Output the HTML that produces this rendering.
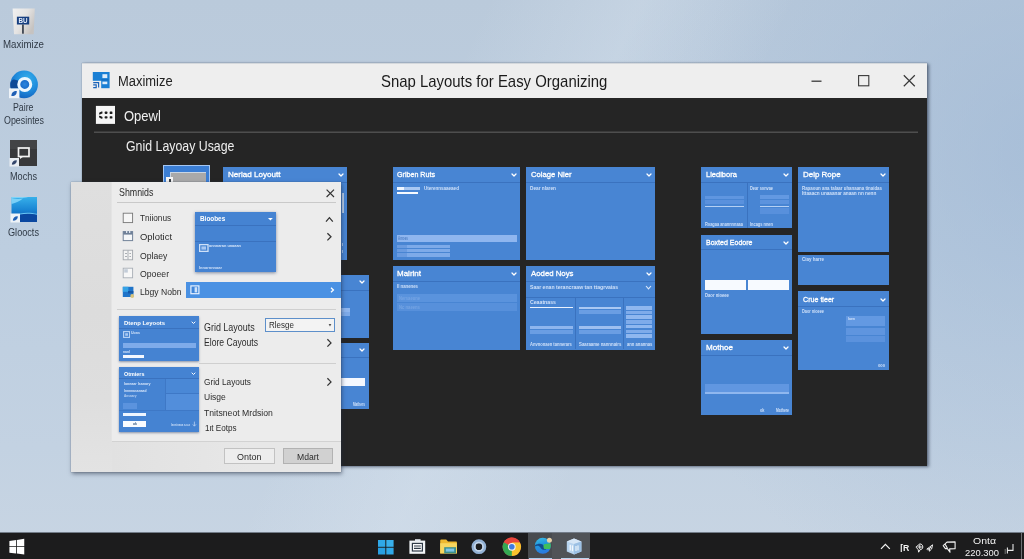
<!DOCTYPE html>
<html lang="en"><head><meta charset="utf-8"><title>Snap Layouts for Easy Organizing</title>
<style>
html,body{margin:0;padding:0}
body{width:1024px;height:559px;overflow:hidden;position:relative;font-family:"Liberation Sans",sans-serif;background:#b9cbdd}
#root{position:absolute;left:0;top:0;width:1024px;height:559px;overflow:hidden;will-change:transform}
#root div,#root span,#root svg,#root section{position:absolute;display:block}
.grp{left:0;top:0;width:0;height:0}
.t{white-space:nowrap;transform-origin:0 0}
</style></head><body><div id="root">
<section id="wallpaper" class="grp" aria-label="Desktop wallpaper">
<div style="left:0;top:0;width:1024px;height:559px;background:linear-gradient(180deg,#bacadb 0%,#bdcee0 45%,#c3d2e2 80%,#c8d5e3 100%)"></div>
<div style="left:0;top:0;width:1024px;height:559px;background:radial-gradient(ellipse 430px 470px at 1040px 150px,rgba(152,179,211,.55) 0%,rgba(160,185,214,.36) 45%,rgba(172,193,218,0) 100%)"></div>
<div style="left:0;top:0;width:1024px;height:559px;background:linear-gradient(115deg,rgba(255,255,255,0) 38%,rgba(225,235,245,.28) 50%,rgba(255,255,255,0) 62%)"></div>
</section>
<section id="desktop-icons" class="grp" aria-label="Desktop icons">
<svg style="left:12px;top:7px;" width="25" height="28" viewBox="0 0 25 28"><defs><linearGradient id="g1" x1="0" x2="1" y1="0" y2=".6"><stop offset="0" stop-color="#f1f1f1"/><stop offset=".55" stop-color="#e4e3e2"/><stop offset="1" stop-color="#c6c3c1"/></linearGradient></defs>
<path d="M.6 1.4 L22.8 1.4 L21.7 27.2 L2 27.2 Z" fill="url(#g1)"/>
<rect x="4.9" y="9.7" width="12.3" height="7.8" fill="#173f80"/>
<text x="11.05" y="16" text-anchor="middle" font-family="Liberation Sans, sans-serif" font-weight="bold" font-size="6.6" fill="#e6eefb" textLength="9" lengthAdjust="spacingAndGlyphs">BU</text>
<rect x="10.2" y="17.5" width="1.5" height="9.2" fill="#202a38"/></svg>
<span class="t" style="left:3px;top:39px;font-size:10.43px;line-height:11px;color:#303a46;transform:scaleX(0.931);">Maximize</span>
<svg style="left:8px;top:70px;" width="32" height="30" viewBox="0 0 32 30"><defs><radialGradient id="g2" cx=".62" cy=".3" r=".85"><stop offset="0" stop-color="#35aeea"/><stop offset=".5" stop-color="#1f8bdc"/><stop offset="1" stop-color="#0e55b4"/></radialGradient>
<radialGradient id="g2b" cx=".5" cy=".5" r=".5"><stop offset="0" stop-color="#2a86de"/><stop offset="1" stop-color="#1463c4"/></radialGradient></defs>
<circle cx="16.1" cy="14.4" r="13.8" fill="url(#g2)"/>
<path d="M2.4 13 C3 10.8 4.4 9.6 6 9.4 L10 10.6 L10 18.6 L2.6 18.6 C2.3 16.8 2.2 15 2.4 13 Z" fill="#0b4896"/>
<circle cx="16.75" cy="14.4" r="6" fill="url(#g2b)" stroke="#ecf7ff" stroke-width="3"/>
<rect x="1" y="18.4" width="10.4" height="9.8" fill="#eef3f8"/>
<path d="M3.4 26 C3.2 22.8 5.8 20.8 8.8 21 C9 24.4 6.6 26.6 3.4 26 Z" fill="#1f5fb5"/></svg>
<span class="t" style="left:13px;top:102px;font-size:10.43px;line-height:11px;color:#303a46;transform:scaleX(0.842);">Paire</span>
<span class="t" style="left:4px;top:115px;font-size:10.43px;line-height:11px;color:#303a46;transform:scaleX(0.852);">Opesintes</span>
<svg style="left:9px;top:139px;" width="30" height="29" viewBox="0 0 30 29"><rect x="1" y="1" width="27" height="26" fill="#38393b"/>
<rect x="1" y="1" width="27" height="9" fill="#434446"/>
<rect x="9.5" y="9" width="10.5" height="8.5" fill="none" stroke="#f4f4f4" stroke-width="1.7"/>
<path d="M11 17 L11 20 L14.5 17.5 Z" fill="#f4f4f4"/>
<rect x="0.5" y="19" width="9.5" height="8.5" fill="#e9edf2"/>
<path d="M2.8 25.6 C2.8 23 5 21 7.8 21.3 C8 24 5.8 26.2 2.8 25.6 Z" fill="#34466b"/></svg>
<span class="t" style="left:10px;top:171px;font-size:10.14px;line-height:11px;color:#303a46;transform:scaleX(0.904);">Mochs</span>
<svg style="left:9.5px;top:196.3px;" width="29" height="28" viewBox="0 0 29 28"><defs><linearGradient id="g4" x1="0" y1="0" x2="0" y2="1"><stop offset="0" stop-color="#37b0ea"/><stop offset=".5" stop-color="#1a86d4"/><stop offset="1" stop-color="#0b4fa8"/></linearGradient></defs>
<rect x="1.5" y="1" width="25.5" height="25" fill="url(#g4)"/>
<path d="M1.5 3 C8 1.5 14 2.5 18 1 L1.5 1 Z M1.5 3 L1.5 8 C6 7 10 5 13 2.5 C9 3 5 3 1.5 3Z" fill="#8fdcfb" opacity=".8"/>
<path d="M10 18 C16 16.5 22 17.2 27 18.2 L27 26 L10 26 Z" fill="#0a47a0"/>
<path d="M10 17.6 C16 16 22 16.8 27 17.8 L27 18.8 C22 17.8 16 17.2 10 18.6 Z" fill="#69c6f5"/>
<rect x="0.5" y="17.5" width="9.5" height="9" fill="#eef3f8"/>
<path d="M2.8 24.6 C2.8 22 5 20 7.8 20.3 C8 23 5.8 25.2 2.8 24.6 Z" fill="#1f5fb5"/></svg>
<span class="t" style="left:8px;top:227px;font-size:10.14px;line-height:11px;color:#303a46;transform:scaleX(0.902);">Gloocts</span>
</section>
<section id="app-window" class="grp" aria-label="Snap Layouts window">
<div style="left:82px;top:63px;width:845px;height:403px;background:#252525;box-shadow:2px 1px 3px rgba(45,55,75,.6),0 0 1px rgba(45,55,75,.5)"></div>
<div style="left:82px;top:63px;width:845px;height:35px;background:#eeeeee;"></div>
<div style="left:82px;top:63px;width:845px;height:1px;background:#d4d8dc;"></div>
<svg style="left:91px;top:71px;" width="19" height="19" viewBox="0 0 19 19"><rect x="1.8" y="1" width="16.8" height="16.2" fill="#1a7fd4"/>
<rect x="11.4" y="3.2" width="4.9" height="3.9" fill="#dcecfa"/><rect x="11.4" y="10.6" width="4.9" height="2.6" fill="#dcecfa"/>
<rect x="10.4" y="8.4" width="7" height="1" fill="#1568b8"/>
<rect x="0" y="9.8" width="10.2" height="9.2" fill="#eeeeee"/>
<path d="M2.2 11.6 L7.6 11.6 L7.6 16.6 M2.2 13.9 L5.2 13.9 L5.2 16.6 L2.2 16.6" stroke="#1b63b8" stroke-width="1.15" fill="none"/></svg>
<span class="t" style="left:118.4px;top:73px;font-size:13.91px;line-height:16px;color:#222;transform:scaleX(0.930);">Maximize</span>
<span class="t" style="left:380.5px;top:72px;font-size:16.81px;line-height:19px;color:#1a1a1a;transform:scaleX(0.888);">Snap Layouts for Easy Organizing</span>
<svg style="left:808px;top:72px;" width="112" height="18" viewBox="0 0 112 18"><path d="M3.5 9.2 H13.5" stroke="#383838" stroke-width="1.3"/>
<rect x="50.6" y="3.6" width="10.2" height="10.2" fill="none" stroke="#383838" stroke-width="1.1"/>
<path d="M95.8 3.3 L106.8 14.2 M106.8 3.3 L95.8 14.2" stroke="#383838" stroke-width="1.2"/></svg>
<svg style="left:95px;top:105px;" width="21" height="20" viewBox="0 0 21 20"><rect x=".9" y=".9" width="19.1" height="18" fill="#f6f6f6"/>
<g fill="#1e1e1e"><rect x="9.6" y="6.6" width="2.9" height="2.3" rx=".8"/><rect x="14.7" y="6.6" width="2.7" height="2.3" rx=".5"/>
<rect x="9.6" y="11.3" width="2.9" height="2.3" rx=".8"/><rect x="14.7" y="11.3" width="2.7" height="2.3" rx=".5"/>
<path d="M7.2 6.2 L4.4 7.4 L3.9 9.4 L5.6 9.2 L7.6 8.2 Z M3.9 10.8 L5.6 11 L7.6 12 L7.2 14 L4.4 12.8 Z"/></g></svg>
<span class="t" style="left:123.6px;top:107px;font-size:15.22px;line-height:17px;color:#f0f0f0;transform:scaleX(0.855);">Opewl</span>
<div style="left:94px;top:131px;width:824px;height:1px;background:#3a3a3a;"></div>
<div style="left:94px;top:132px;width:824px;height:1px;background:#4e4e4e;"></div>
<span class="t" style="left:126px;top:137px;font-size:15.36px;line-height:17px;color:#eeeeee;transform:scaleX(0.804);">Gnid Layoay Usage</span>
<div style="left:163px;top:165px;width:47.2px;height:35px;background:#3b7ed4;box-shadow:inset 0 0 0 1px #a4c6f2"></div>
<div style="left:170.2px;top:171.8px;width:35.7px;height:18.2px;background:#a9a9a9;box-shadow:inset 1px 1px 0 #c9d6e4"></div>
<div style="left:166px;top:176.5px;width:7.3px;height:8.5px;background:#f4f4f4;"></div>
<div style="left:168.6px;top:178.6px;width:2.4px;height:3.4px;background:#3a4046;"></div>
<div style="left:223px;top:167px;width:124px;height:93px;background:#4885d3;"></div>
<div style="left:223px;top:181.5px;width:124px;height:1px;background:#3a72bf;"></div>
<span class="t" style="left:227.5px;top:170px;font-size:7.97px;line-height:9px;color:#fff;transform:scaleX(1.013);-webkit-text-stroke:.3px #fff;">Nerlad Loyoutt</span>
<svg style="left:337.7px;top:173.2px;" width="6" height="4" viewBox="0 0 6 4"><path d="M1 1 L3 3 L5 1" stroke="#fff" stroke-width="1.25" fill="none" stroke-linecap="round" stroke-linejoin="round"/></svg>
<div style="left:341.5px;top:192.5px;width:2.1px;height:20.5px;background:#b8cdea;"></div>
<div style="left:341.5px;top:243px;width:1.7px;height:3px;background:#9fc0ee;"></div>
<div style="left:341.5px;top:250px;width:1.7px;height:3px;background:#9fc0ee;"></div>
<div style="left:336px;top:275px;width:32.5px;height:62.5px;background:#4885d3;"></div>
<div style="left:336px;top:289.5px;width:32.5px;height:1px;background:#3a72bf;"></div>
<svg style="left:359px;top:280.4px;" width="6" height="4" viewBox="0 0 6 4"><path d="M1 1 L3 3 L5 1" stroke="#fff" stroke-width="1.25" fill="none" stroke-linecap="round" stroke-linejoin="round"/></svg>
<div style="left:340px;top:307.5px;width:9.5px;height:4px;background:#8fb6ee;"></div>
<div style="left:340px;top:312.3px;width:9.5px;height:3.7px;background:#7eaae8;"></div>
<div style="left:336px;top:343px;width:32.5px;height:66px;background:#4885d3;"></div>
<div style="left:336px;top:357px;width:32.5px;height:1px;background:#3a72bf;"></div>
<svg style="left:359px;top:348.2px;" width="6" height="4" viewBox="0 0 6 4"><path d="M1 1 L3 3 L5 1" stroke="#fff" stroke-width="1.25" fill="none" stroke-linecap="round" stroke-linejoin="round"/></svg>
<div style="left:340px;top:378px;width:25.3px;height:8px;background:#f4f8ff;"></div>
<span class="t" style="left:353px;top:402px;font-size:4.42px;line-height:5px;color:#e6f0ff;transform:scaleX(0.708);font-weight:bold;opacity:0.85;">Mathers</span>
<div style="left:392.5px;top:167px;width:127.5px;height:93px;background:#4885d3;"></div>
<div style="left:392.5px;top:181.5px;width:127.5px;height:1px;background:#3a72bf;"></div>
<span class="t" style="left:397px;top:170px;font-size:7.97px;line-height:9px;color:#fff;transform:scaleX(0.894);-webkit-text-stroke:.3px #fff;">Griben Ruts</span>
<svg style="left:510.7px;top:173.2px;" width="6" height="4" viewBox="0 0 6 4"><path d="M1 1 L3 3 L5 1" stroke="#fff" stroke-width="1.25" fill="none" stroke-linecap="round" stroke-linejoin="round"/></svg>
<div style="left:396.5px;top:187px;width:23.5px;height:2.6px;background:#a9c8f3;"></div>
<div style="left:396.5px;top:187px;width:7.5px;height:2.6px;background:#eef5ff;"></div>
<div style="left:396.5px;top:192px;width:21.5px;height:2px;background:#f6faff;"></div>
<span class="t" style="left:424px;top:186px;font-size:4.42px;line-height:5px;color:#e6f0ff;transform:scaleX(1.025);font-weight:bold;opacity:0.85;">Uterennsaaeaed</span>
<div style="left:396.5px;top:234.8px;width:120.5px;height:7.6px;background:#8fb6ef;"></div>
<span class="t" style="left:398px;top:236px;font-size:4.42px;line-height:5px;color:#4f7fc4;transform:scaleX(0.678);font-weight:bold;opacity:1;">Amoes</span>
<div style="left:396.5px;top:245px;width:53px;height:3.3px;background:#7daae9;"></div>
<div style="left:396.5px;top:245px;width:10.5px;height:3.3px;background:#6a9be0;"></div>
<div style="left:396.5px;top:249.2px;width:53px;height:3.3px;background:#7daae9;"></div>
<div style="left:396.5px;top:249.2px;width:10.5px;height:3.3px;background:#6a9be0;"></div>
<div style="left:396.5px;top:253.4px;width:53px;height:3.3px;background:#7daae9;"></div>
<div style="left:396.5px;top:253.4px;width:10.5px;height:3.3px;background:#6a9be0;"></div>
<div style="left:526px;top:167px;width:129.3px;height:93px;background:#4885d3;"></div>
<div style="left:526px;top:181.5px;width:129.3px;height:1px;background:#3a72bf;"></div>
<span class="t" style="left:530.5px;top:170px;font-size:7.97px;line-height:9px;color:#fff;transform:scaleX(0.962);-webkit-text-stroke:.3px #fff;">Colage Nler</span>
<svg style="left:646px;top:173.2px;" width="6" height="4" viewBox="0 0 6 4"><path d="M1 1 L3 3 L5 1" stroke="#fff" stroke-width="1.25" fill="none" stroke-linecap="round" stroke-linejoin="round"/></svg>
<span class="t" style="left:530px;top:186px;font-size:4.42px;line-height:5px;color:#e6f0ff;transform:scaleX(1.069);font-weight:bold;opacity:0.85;">Dear nlaren</span>
<div style="left:392.5px;top:266px;width:127.5px;height:83.5px;background:#4885d3;"></div>
<div style="left:392.5px;top:280.5px;width:127.5px;height:1px;background:#3a72bf;"></div>
<span class="t" style="left:397px;top:269px;font-size:7.97px;line-height:9px;color:#fff;transform:scaleX(1.004);-webkit-text-stroke:.3px #fff;">Mairint</span>
<svg style="left:510.7px;top:272.2px;" width="6" height="4" viewBox="0 0 6 4"><path d="M1 1 L3 3 L5 1" stroke="#fff" stroke-width="1.25" fill="none" stroke-linecap="round" stroke-linejoin="round"/></svg>
<span class="t" style="left:397px;top:284px;font-size:4.42px;line-height:5px;color:#e6f0ff;transform:scaleX(0.971);font-weight:bold;opacity:0.85;">Il nanenes</span>
<div style="left:397px;top:294.4px;width:120px;height:7.8px;background:#5a93dd;"></div>
<div style="left:397px;top:303.2px;width:120px;height:7.5px;background:#5790db;"></div>
<span class="t" style="left:399px;top:296px;font-size:4.42px;line-height:5px;color:#78a6e4;transform:scaleX(0.929);font-weight:bold;opacity:0.9;">Nersaeune</span>
<span class="t" style="left:399px;top:305px;font-size:4.42px;line-height:5px;color:#78a6e4;transform:scaleX(0.950);font-weight:bold;opacity:0.9;">Nc naeens</span>
<div style="left:526px;top:266px;width:129.3px;height:83.5px;background:#4885d3;"></div>
<div style="left:526px;top:280.5px;width:129.3px;height:1px;background:#3a72bf;"></div>
<span class="t" style="left:530.5px;top:269px;font-size:7.97px;line-height:9px;color:#fff;transform:scaleX(0.979);-webkit-text-stroke:.3px #fff;">Aoded Noys</span>
<svg style="left:646px;top:272.2px;" width="6" height="4" viewBox="0 0 6 4"><path d="M1 1 L3 3 L5 1" stroke="#fff" stroke-width="1.25" fill="none" stroke-linecap="round" stroke-linejoin="round"/></svg>
<span class="t" style="left:530px;top:284px;font-size:5.22px;line-height:6px;color:#e6f0ff;transform:scaleX(0.985);font-weight:bold;opacity:0.85;">Saar enan terancraaw tan ttagrvaias</span>
<svg style="left:644.5px;top:284.5px;" width="7" height="5" viewBox="0 0 7 5"><path d="M1 1 L3.5 3.8 L6 1" stroke="#dbe8fb" stroke-width="1.1" fill="none"/></svg>
<div style="left:526px;top:296.8px;width:129.3px;height:1px;background:#3a72bf;"></div>
<div style="left:575.2px;top:297.8px;width:1px;height:51.7px;background:#3a72bf;"></div>
<div style="left:623.4px;top:297.8px;width:1px;height:51.7px;background:#3a72bf;"></div>
<span class="t" style="left:530px;top:300px;font-size:4.42px;line-height:5px;color:#e6f0ff;transform:scaleX(1.176);font-weight:bold;opacity:0.85;">Ceaatnass</span>
<div style="left:530px;top:306.5px;width:43px;height:1.1px;background:#e9f2ff;"></div>
<div style="left:530px;top:326px;width:43px;height:3.4px;background:#8db5ee;"></div>
<div style="left:530px;top:330.2px;width:43px;height:3.8px;background:#6a9ee3;"></div>
<span class="t" style="left:530px;top:342px;font-size:4.42px;line-height:5px;color:#e6f0ff;transform:scaleX(0.924);font-weight:bold;opacity:0.85;">Anvnonaen tannerars</span>
<div style="left:578.5px;top:306.5px;width:42.5px;height:2.3px;background:#a9c8f3;"></div>
<div style="left:578.5px;top:309.6px;width:42.5px;height:4.4px;background:#6a9ee3;"></div>
<div style="left:578.5px;top:326px;width:42.5px;height:3px;background:#9dbff0;"></div>
<div style="left:578.5px;top:329.8px;width:42.5px;height:4.2px;background:#6a9ee3;"></div>
<span class="t" style="left:578.5px;top:342px;font-size:4.42px;line-height:5px;color:#e6f0ff;transform:scaleX(0.983);font-weight:bold;opacity:0.85;">Saaraame nannnairs</span>
<div style="left:626px;top:306px;width:25.5px;height:3.7px;background:#8fb7ef;"></div>
<div style="left:626px;top:310.7px;width:25.5px;height:3.7px;background:#7eabea;"></div>
<div style="left:626px;top:315.4px;width:25.5px;height:3.7px;background:#8fb7ef;"></div>
<div style="left:626px;top:320.1px;width:25.5px;height:3.7px;background:#7eabea;"></div>
<div style="left:626px;top:324.8px;width:25.5px;height:3.7px;background:#8fb7ef;"></div>
<div style="left:626px;top:329.5px;width:25.5px;height:3.7px;background:#7eabea;"></div>
<div style="left:626px;top:334.2px;width:25.5px;height:3.7px;background:#8fb7ef;"></div>
<span class="t" style="left:626.5px;top:342px;font-size:4.42px;line-height:5px;color:#e6f0ff;transform:scaleX(0.944);font-weight:bold;opacity:0.85;">ann anannas</span>
<div style="left:701px;top:167px;width:91.4px;height:61.4px;background:#4885d3;"></div>
<div style="left:701px;top:181.5px;width:91.4px;height:1px;background:#3a72bf;"></div>
<span class="t" style="left:705.5px;top:170px;font-size:7.97px;line-height:9px;color:#fff;transform:scaleX(0.942);-webkit-text-stroke:.3px #fff;">Lledibora</span>
<svg style="left:783.1px;top:173.2px;" width="6" height="4" viewBox="0 0 6 4"><path d="M1 1 L3 3 L5 1" stroke="#fff" stroke-width="1.25" fill="none" stroke-linecap="round" stroke-linejoin="round"/></svg>
<div style="left:746.6px;top:182px;width:1px;height:46.4px;background:#3a72bf;"></div>
<div style="left:705px;top:195.8px;width:39px;height:3.5px;background:#5f96e0;"></div>
<div style="left:705px;top:200.2px;width:39px;height:4.3px;background:#5a91dd;"></div>
<div style="left:705px;top:205.8px;width:39px;height:1.2px;background:#b5d0f4;"></div>
<span class="t" style="left:705px;top:222px;font-size:4.42px;line-height:5px;color:#e6f0ff;transform:scaleX(0.884);font-weight:bold;opacity:0.85;">Roagaa anannnnaaa</span>
<span class="t" style="left:750px;top:186px;font-size:4.42px;line-height:5px;color:#e6f0ff;transform:scaleX(0.875);font-weight:bold;opacity:0.85;">Dear sonvae</span>
<div style="left:760px;top:195px;width:28.5px;height:4px;background:#6399e2;"></div>
<div style="left:760px;top:200px;width:28.5px;height:4px;background:#5c93de;"></div>
<div style="left:760px;top:205.8px;width:28.5px;height:1.2px;background:#b5d0f4;"></div>
<div style="left:760px;top:208px;width:28.5px;height:6px;background:#5890dc;"></div>
<span class="t" style="left:750px;top:222px;font-size:4.42px;line-height:5px;color:#e6f0ff;transform:scaleX(0.892);font-weight:bold;opacity:0.85;">Incags nnen</span>
<div style="left:701px;top:234.7px;width:91.4px;height:99.3px;background:#4885d3;"></div>
<div style="left:701px;top:249.2px;width:91.4px;height:1px;background:#3a72bf;"></div>
<span class="t" style="left:705.5px;top:238px;font-size:7.97px;line-height:9px;color:#fff;transform:scaleX(0.882);-webkit-text-stroke:.3px #fff;">Boxted Eodore</span>
<svg style="left:783.1px;top:240.9px;" width="6" height="4" viewBox="0 0 6 4"><path d="M1 1 L3 3 L5 1" stroke="#fff" stroke-width="1.25" fill="none" stroke-linecap="round" stroke-linejoin="round"/></svg>
<div style="left:705px;top:280.3px;width:41px;height:10.1px;background:#f7faff;"></div>
<div style="left:747.8px;top:280.3px;width:41.2px;height:10.1px;background:#f7faff;"></div>
<span class="t" style="left:705px;top:293px;font-size:4.42px;line-height:5px;color:#e6f0ff;transform:scaleX(0.949);font-weight:bold;opacity:0.85;">Daor nioeee</span>
<div style="left:798.3px;top:167px;width:90.5px;height:85.2px;background:#4885d3;"></div>
<div style="left:798.3px;top:181.5px;width:90.5px;height:1px;background:#3a72bf;"></div>
<span class="t" style="left:802.8px;top:170px;font-size:7.97px;line-height:9px;color:#fff;transform:scaleX(0.998);-webkit-text-stroke:.3px #fff;">Delp Rope</span>
<svg style="left:879.5px;top:173.2px;" width="6" height="4" viewBox="0 0 6 4"><path d="M1 1 L3 3 L5 1" stroke="#fff" stroke-width="1.25" fill="none" stroke-linecap="round" stroke-linejoin="round"/></svg>
<span class="t" style="left:801.5px;top:186px;font-size:4.42px;line-height:5px;color:#e6f0ff;transform:scaleX(0.996);font-weight:bold;opacity:0.85;">Rapaoun ana talaar uhanaana  tinaidas</span>
<span class="t" style="left:801.5px;top:191px;font-size:4.42px;line-height:5px;color:#e6f0ff;transform:scaleX(1.064);font-weight:bold;opacity:0.85;">Ittaaacn unaaanar anaan nn nenn</span>
<div style="left:798.3px;top:255.2px;width:90.5px;height:29.6px;background:#4885d3;"></div>
<span class="t" style="left:802px;top:257px;font-size:4.42px;line-height:5px;color:#e6f0ff;transform:scaleX(1.018);font-weight:bold;opacity:0.85;">Ciay harre</span>
<div style="left:798.3px;top:291.3px;width:90.5px;height:78.7px;background:#4885d3;"></div>
<div style="left:798.3px;top:305.8px;width:90.5px;height:1px;background:#3a72bf;"></div>
<span class="t" style="left:802.8px;top:295px;font-size:7.97px;line-height:9px;color:#fff;transform:scaleX(0.892);-webkit-text-stroke:.3px #fff;">Crue tleer</span>
<svg style="left:879.5px;top:297.5px;" width="6" height="4" viewBox="0 0 6 4"><path d="M1 1 L3 3 L5 1" stroke="#fff" stroke-width="1.25" fill="none" stroke-linecap="round" stroke-linejoin="round"/></svg>
<span class="t" style="left:802px;top:309px;font-size:4.42px;line-height:5px;color:#e6f0ff;transform:scaleX(0.870);font-weight:bold;opacity:0.85;">Daor nioeee</span>
<div style="left:846px;top:316.3px;width:39px;height:10.1px;background:#6399e2;"></div>
<div style="left:846px;top:327.6px;width:39px;height:7px;background:#5f95df;"></div>
<div style="left:846px;top:336px;width:39px;height:6.2px;background:#5b92dd;"></div>
<span class="t" style="left:848px;top:317px;font-size:3.77px;line-height:4px;color:#e6f0ff;transform:scaleX(0.928);font-weight:bold;opacity:0.85;">Iaen</span>
<span class="t" style="left:878px;top:363px;font-size:4.42px;line-height:5px;color:#e6f0ff;transform:scaleX(0.864);font-weight:bold;opacity:0.85;">ooo</span>
<div style="left:701px;top:340px;width:91.4px;height:74.6px;background:#4885d3;"></div>
<div style="left:701px;top:354.5px;width:91.4px;height:1px;background:#3a72bf;"></div>
<span class="t" style="left:705.5px;top:343px;font-size:7.97px;line-height:9px;color:#fff;transform:scaleX(1.016);-webkit-text-stroke:.3px #fff;">Mothoe</span>
<svg style="left:783.1px;top:346.2px;" width="6" height="4" viewBox="0 0 6 4"><path d="M1 1 L3 3 L5 1" stroke="#fff" stroke-width="1.25" fill="none" stroke-linecap="round" stroke-linejoin="round"/></svg>
<div style="left:705px;top:384px;width:84px;height:7.6px;background:#6197e1;"></div>
<div style="left:705px;top:392px;width:84px;height:1.6px;background:#8fb7ef;"></div>
<span class="t" style="left:760px;top:408px;font-size:4.42px;line-height:5px;color:#e6f0ff;transform:scaleX(0.872);font-weight:bold;opacity:0.85;">ok</span>
<span class="t" style="left:776px;top:408px;font-size:4.42px;line-height:5px;color:#e6f0ff;transform:scaleX(0.767);font-weight:bold;opacity:0.85;">Mathere</span>
</section>
<section id="layout-dialog" class="grp" aria-label="Layout dialog">
<div style="left:71px;top:181.5px;width:269.5px;height:290.0px;background:#ececec;box-shadow:1px 2px 4px rgba(30,40,60,.5),0 0 1px rgba(60,70,90,.6)"></div>
<div style="left:71px;top:181.5px;width:40.5px;height:290px;background:linear-gradient(180deg,#dfdfdf 0%,#dcdcdc 45%,#dedede 75%,#e3e3e3 100%);"></div>
<div style="left:111.5px;top:441px;width:229px;height:30.5px;background:linear-gradient(90deg,#e1e1e1,#e7e7e7 60%)"></div>
<div style="left:111px;top:181.5px;width:1px;height:259.5px;background:#e4e4e4;"></div>
<span class="t" style="left:119px;top:187px;font-size:10.14px;line-height:11px;color:#2c2c2c;transform:scaleX(0.874);">Shmnids</span>
<svg style="left:325px;top:187.5px;" width="11" height="11" viewBox="0 0 11 11"><path d="M1.6 1.6 L9 9 M9 1.6 L1.6 9" stroke="#333" stroke-width="1.15"/></svg>
<div style="left:116.5px;top:202px;width:219px;height:1px;background:#c9c9c9;"></div>
<span class="t" style="left:139.6px;top:212px;font-size:9.86px;line-height:11px;color:#2c2c2c;transform:scaleX(0.837);">Tniionus</span>
<span class="t" style="left:139.6px;top:231px;font-size:9.86px;line-height:11px;color:#2c2c2c;transform:scaleX(0.960);">Oplotict</span>
<span class="t" style="left:139.6px;top:250px;font-size:9.86px;line-height:11px;color:#2c2c2c;transform:scaleX(0.877);">Oplaey</span>
<span class="t" style="left:139.6px;top:268px;font-size:9.86px;line-height:11px;color:#2c2c2c;transform:scaleX(0.885);">Opoeer</span>
<span class="t" style="left:139.6px;top:286px;font-size:9.86px;line-height:11px;color:#2c2c2c;transform:scaleX(0.874);">Lbgy Nobn</span>
<svg style="left:121.5px;top:212px;" width="12" height="12" viewBox="0 0 12 12"><rect x="1.2" y="1.2" width="9.4" height="9.4" fill="#f6f6f6" stroke="#777" stroke-width=".9"/></svg>
<svg style="left:121.5px;top:230px;" width="12" height="12" viewBox="0 0 12 12"><rect x="1.2" y="1.6" width="9.4" height="9" fill="#f4f6f8" stroke="#73839a" stroke-width="1"/><rect x="1.2" y="1.6" width="9.4" height="3" fill="#6f8098"/><rect x="4" y="0.6" width="1.3" height="2.4" fill="#dfe6ee"/><rect x="7" y="0.6" width="1.3" height="2.4" fill="#dfe6ee"/></svg>
<svg style="left:121.5px;top:248.5px;" width="12" height="12" viewBox="0 0 12 12"><rect x="1.2" y="1.2" width="9.4" height="9.6" fill="#f4f4f4" stroke="#a2a6ac" stroke-width=".9"/><path d="M6 1.5 V10.5 M3 4.5 h2 M3 7.5 h2 M7.4 4.5 h1.6 M7.4 7.5 h1.6" stroke="#a2a6ac" stroke-width=".9" fill="none"/></svg>
<svg style="left:121.5px;top:267px;" width="12" height="12" viewBox="0 0 12 12"><rect x="1.2" y="1.2" width="9.4" height="9.6" fill="#f7f7f7" stroke="#a8aeb6" stroke-width=".9"/><rect x="2.2" y="2.2" width="3.6" height="3.4" fill="#c3ccd8"/></svg>
<svg style="left:121.5px;top:285.5px;" width="13" height="12" viewBox="0 0 13 12"><rect x="0.8" y="0.8" width="10.6" height="10.2" fill="#1f74c9"/><rect x="0.8" y="0.8" width="5.6" height="5" fill="#36a3e6"/><rect x="6" y="5" width="5.4" height="2.4" fill="#1558a8"/><circle cx="10.2" cy="10" r="1.9" fill="#d9c37a"/></svg>
<div style="left:195.4px;top:211.5px;width:81px;height:60.8px;background:#4583d2;box-shadow:0 1px 3px rgba(40,60,100,.55)"></div>
<div style="left:195.4px;top:224.6px;width:81px;height:1px;background:#3a72bf;"></div>
<div style="left:195.4px;top:241.4px;width:81px;height:0.9px;background:#3a72bf;"></div>
<span class="t" style="left:199.8px;top:215px;font-size:7.1px;line-height:8px;color:#fff;transform:scaleX(0.900);font-weight:bold;">Bioobes</span>
<svg style="left:266.5px;top:216.6px;" width="7" height="5" viewBox="0 0 7 5"><path d="M1 1 L3.4 3.4 L5.8 1 Z" fill="#fff"/></svg>
<svg style="left:198.5px;top:244px;" width="10" height="8" viewBox="0 0 10 8"><rect x="0.6" y="0.6" width="8.4" height="6.8" fill="#4583d2" stroke="#cfe1f8" stroke-width="1.3"/><rect x="2.4" y="2.4" width="4.6" height="3.2" fill="#a9c8f2"/></svg>
<span class="t" style="left:209px;top:243px;font-size:4.2px;line-height:5px;color:#e6f0ff;transform:scaleX(0.920);font-weight:bold;opacity:0.9;">annnaran unaaan</span>
<span class="t" style="left:199px;top:265px;font-size:4.2px;line-height:5px;color:#e6f0ff;transform:scaleX(0.948);font-weight:bold;opacity:0.85;">Innarnnnaar</span>
<svg style="left:324.5px;top:215.5px;" width="9" height="7" viewBox="0 0 9 7"><path d="M1 5.6 L4.4 1.6 L7.8 5.6" stroke="#333" stroke-width="1.25" fill="none"/></svg>
<svg style="left:326px;top:231.8px;" width="7" height="10" viewBox="0 0 7 10"><path d="M1.4 1.2 L5 4.8 L1.4 8.4" stroke="#333" stroke-width="1.25" fill="none"/></svg>
<div style="left:185.5px;top:281.5px;width:155px;height:16.1px;background:#4a91e3;"></div>
<svg style="left:189.5px;top:285px;" width="10" height="10" viewBox="0 0 10 10"><rect x="0.9" y="0.9" width="8" height="7.8" fill="#3f86da" stroke="#e8f2ff" stroke-width="1.2"/><rect x="4.6" y="2.2" width="2.6" height="5.2" fill="#cfe3fb"/></svg>
<svg style="left:329.8px;top:286.6px;" width="5" height="6" viewBox="0 0 5 6"><path d="M1 .8 L3.4 3 L1 5.2" stroke="#fff" stroke-width="1.3" fill="none"/></svg>
<div style="left:116.5px;top:308.6px;width:219.5px;height:1px;background:#cfcfcf;"></div>
<div style="left:119.3px;top:316px;width:79.6px;height:44.8px;background:#4583d2;box-shadow:0 1px 2px rgba(40,60,100,.5)"></div>
<div style="left:119.3px;top:327.6px;width:79.6px;height:0.9px;background:#3a72bf;"></div>
<span class="t" style="left:123.5px;top:319px;font-size:6.23px;line-height:7px;color:#fff;transform:scaleX(0.950);font-weight:bold;">Dtenp Leyoots</span>
<svg style="left:190.5px;top:321.2px;" width="5" height="3.6" viewBox="0 0 5 3.6"><path d="M.7 .7 L2.5 2.5 L4.3 .7" stroke="#fff" stroke-width="1" fill="none"/></svg>
<svg style="left:122.5px;top:331.4px;" width="7.4" height="7.2" viewBox="0 0 7.4 7.2"><rect x=".6" y=".6" width="6" height="5.8" fill="#4583d2" stroke="#bcd5f6" stroke-width="1.1"/><rect x="2.2" y="2.2" width="2.8" height="2.6" fill="#a9c8f2"/></svg>
<span class="t" style="left:131px;top:330px;font-size:4.06px;line-height:5px;color:#e6f0ff;transform:scaleX(0.887);font-weight:bold;opacity:0.9;">Uons</span>
<div style="left:123px;top:343px;width:73px;height:4.8px;background:#7eabea;"></div>
<span class="t" style="left:123px;top:350px;font-size:3.77px;line-height:4px;color:#e6f0ff;transform:scaleX(0.903);font-weight:bold;opacity:0.9;">nanl</span>
<div style="left:123px;top:354.8px;width:21px;height:3px;background:#f4f8ff;"></div>
<span class="t" style="left:204.3px;top:322px;font-size:10px;line-height:11px;color:#2c2c2c;transform:scaleX(0.894);">Grid Layouts</span>
<div style="left:265.2px;top:318.2px;width:67.4px;height:11.4px;background:#f3f3f3;border:1px solid #5d8fca;box-sizing:content-box"></div>
<span class="t" style="left:269px;top:320px;font-size:8.7px;line-height:10px;color:#2c2c2c;transform:scaleX(0.919);">Rlesge</span>
<svg style="left:328px;top:322.5px;" width="4" height="5" viewBox="0 0 4 5"><path d="M.6 1 L2 3.4 L3.4 1 Z" fill="#555"/></svg>
<span class="t" style="left:204.3px;top:337px;font-size:10px;line-height:11px;color:#2c2c2c;transform:scaleX(0.860);">Elore Cayouts</span>
<svg style="left:325.5px;top:338px;" width="7" height="10" viewBox="0 0 7 10"><path d="M1.4 1.2 L5 4.9 L1.4 8.6" stroke="#333" stroke-width="1.25" fill="none"/></svg>
<div style="left:199px;top:362.6px;width:137px;height:0.9px;background:#cfcfcf;"></div>
<div style="left:119.3px;top:366.5px;width:79.6px;height:65.6px;background:#4583d2;box-shadow:0 1px 2px rgba(40,60,100,.5)"></div>
<div style="left:119.3px;top:378.2px;width:79.6px;height:0.9px;background:#3a72bf;"></div>
<span class="t" style="left:123.5px;top:370px;font-size:6.09px;line-height:7px;color:#fff;transform:scaleX(0.891);font-weight:bold;">Otmiers</span>
<svg style="left:190.5px;top:372px;" width="5" height="3.6" viewBox="0 0 5 3.6"><path d="M.7 .7 L2.5 2.5 L4.3 .7" stroke="#fff" stroke-width="1" fill="none"/></svg>
<div style="left:165.4px;top:393.8px;width:33.5px;height:16.2px;background:#528edb;"></div>
<div style="left:165.4px;top:379.1px;width:33.5px;height:13.9px;background:#4a88d6;"></div>
<div style="left:164.6px;top:379px;width:0.8px;height:31.5px;background:#3e78c6;"></div>
<div style="left:165px;top:393px;width:33.9px;height:0.8px;background:#3e78c6;"></div>
<div style="left:119.3px;top:410px;width:79.6px;height:0.8px;background:#3e78c6;"></div>
<span class="t" style="left:123.5px;top:381px;font-size:3.91px;line-height:5px;color:#e6f0ff;transform:scaleX(0.931);font-weight:bold;opacity:0.9;">Ianeaar Isanary</span>
<span class="t" style="left:123.5px;top:388px;font-size:3.91px;line-height:5px;color:#e6f0ff;transform:scaleX(0.856);font-weight:bold;opacity:0.9;">Innnnasanaad</span>
<span class="t" style="left:123.5px;top:394px;font-size:3.62px;line-height:4px;color:#cfe0f8;transform:scaleX(0.875);font-weight:bold;opacity:0.8;">Ansaary</span>
<div style="left:123px;top:403px;width:14px;height:5.8px;background:#5b93de;"></div>
<div style="left:123px;top:413.4px;width:22.5px;height:2.4px;background:#eef5ff;"></div>
<div style="left:123px;top:420.5px;width:23px;height:6.3px;background:#fafcff;"></div>
<span class="t" style="left:132.5px;top:422px;font-size:3.62px;line-height:4px;color:#35577f;transform:scaleX(0.947);font-weight:bold;">ok</span>
<span class="t" style="left:171px;top:423px;font-size:3.48px;line-height:4px;color:#d4e4fa;transform:scaleX(0.767);font-weight:bold;opacity:0.85;">Ianninaaa a.a.a</span>
<svg style="left:191.5px;top:420.5px;" width="5" height="7" viewBox="0 0 5 7"><path d="M2.4 .6 V5 M.8 3.4 L2.4 5.2 L4 3.4" stroke="#b8d0f2" stroke-width=".8" fill="none"/></svg>
<span class="t" style="left:204px;top:376px;font-size:9.86px;line-height:11px;color:#2c2c2c;transform:scaleX(0.841);">Grid Layouts</span>
<svg style="left:325.5px;top:376.8px;" width="7" height="10" viewBox="0 0 7 10"><path d="M1.4 1.2 L5 4.9 L1.4 8.6" stroke="#333" stroke-width="1.25" fill="none"/></svg>
<span class="t" style="left:204px;top:391px;font-size:9.86px;line-height:11px;color:#2c2c2c;transform:scaleX(0.865);">Uisge</span>
<span class="t" style="left:204px;top:407px;font-size:9.86px;line-height:11px;color:#2c2c2c;transform:scaleX(0.880);">Tnitsneot Mrdsion</span>
<span class="t" style="left:205px;top:422px;font-size:9.86px;line-height:11px;color:#2c2c2c;transform:scaleX(0.826);">1ιt Eotps</span>
<div style="left:111.5px;top:440.6px;width:229px;height:1px;background:#d2d2d2;"></div>
<div style="left:224px;top:448.4px;width:50.5px;height:16px;box-sizing:border-box;background:#ededed;border:1px solid #c2c2c2"></div>
<span class="t" style="left:236.8px;top:451px;font-size:9.42px;line-height:11px;color:#2c2c2c;transform:scaleX(0.955);">Onton</span>
<div style="left:283px;top:448.4px;width:49.7px;height:16px;box-sizing:border-box;background:#d1d1d1;border:1px solid #b2b2b2"></div>
<span class="t" style="left:297px;top:451px;font-size:9.42px;line-height:11px;color:#2c2c2c;transform:scaleX(0.914);">Mdart</span>
</section>
<section id="taskbar" class="grp" aria-label="Taskbar">
<div style="left:0px;top:533px;width:1024px;height:26px;background:#1c1c1d;"></div>
<div style="left:0px;top:532px;width:1024px;height:1px;background:#727c88;"></div>
<svg style="left:9px;top:538px;" width="16" height="17" viewBox="0 0 16 17"><g fill="#fff"><path d="M.4 3 L7.1 2 V8.3 H.4Z"/><path d="M7.9 1.9 L15.25 .75 V8.3 H7.9Z"/><path d="M.4 9.1 H7.1 V15.5 L.4 14.8Z"/><path d="M7.9 9.1 H15.25 V16.4 L7.9 15.6Z"/></g></svg>
<svg style="left:378px;top:539.7px;" width="16" height="15" viewBox="0 0 16 15"><g fill="#2fa8e8"><rect x="0" y="0" width="7.3" height="6.8"/><rect x="8.3" y="0" width="7.3" height="6.8" fill="#38b0ec"/><rect x="0" y="7.7" width="7.3" height="6.8" fill="#289fe2"/><rect x="8.3" y="7.7" width="7.3" height="6.8" fill="#2fa8e8"/></g></svg>
<svg style="left:408.5px;top:539px;" width="17" height="15.5" viewBox="0 0 17 15.5"><rect x=".4" y="1.6" width="15.8" height="13.2" fill="#f1f4f7"/><rect x="6" y="0.2" width="5.6" height="2.4" fill="#e4e9ef"/><rect x="3.4" y="4.4" width="10" height="7.6" fill="#fafbfc" stroke="#2f3a47" stroke-width="1.2"/><path d="M5 7 h6.8 M5 9.4 h6.8" stroke="#2f3a47" stroke-width="1.1"/></svg>
<svg style="left:440px;top:538.6px;" width="18" height="15" viewBox="0 0 18 15"><path d="M.2 1.6 Q.2 .5 1.3 .5 L6.2 .5 L8 2.4 L16.2 2.4 Q16.9 2.4 16.9 3.2 L16.9 14.4 L.2 14.4Z" fill="#eeb82f"/><path d="M.2 4.2 L16.9 4.2 L16.9 14.4 L.2 14.4Z" fill="#f7d660"/><rect x="4.2" y="8.2" width="11.8" height="6.2" fill="#3c8f8c"/><rect x="5.8" y="9.6" width="8.4" height="3" fill="#7cc4e8"/></svg>
<svg style="left:470px;top:537.5px;" width="18" height="18" viewBox="0 0 18 18"><circle cx="8.9" cy="8.7" r="5.4" fill="none" stroke="#93b1d4" stroke-width="4"/><circle cx="8.9" cy="8.7" r="4.2" fill="none" stroke="#c6d7eb" stroke-width="1.6"/></svg>
<svg style="left:501.5px;top:537px;" width="20" height="20" viewBox="0 0 20 20"><circle cx="9.8" cy="9.8" r="9.2" fill="#e8453c"/>
<path d="M9.8 9.8 L1.83 5.2 A9.2 9.2 0 0 0 9.8 19 L14 13 Z" fill="#34a853"/>
<path d="M9.8 9.8 L9.8 19 A9.2 9.2 0 0 0 17.77 5.2 L9.8 5.2 Z" fill="#f9c22e"/>
<path d="M1.83 5.2 A9.2 9.2 0 0 1 17.77 5.2 L9.8 5.2 Z" fill="#e8453c"/>
<circle cx="9.8" cy="9.8" r="3.9" fill="#f3f3f3"/><circle cx="9.8" cy="9.8" r="2.8" fill="#3f7be0"/></svg>
<div style="left:527.8px;top:533px;width:24.6px;height:26px;background:#484b4f;"></div>
<div style="left:552.4px;top:533px;width:38px;height:26px;background:#505357;"></div>
<div style="left:528.5px;top:557.6px;width:23.5px;height:1.4px;background:#a9cdee;"></div>
<div style="left:560.6px;top:557.6px;width:28.8px;height:1.4px;background:#b9d4ee;"></div>
<svg style="left:534px;top:537px;" width="19" height="18" viewBox="0 0 19 18"><defs><linearGradient id="ge" x1="0" y1="0" x2=".3" y2="1"><stop offset="0" stop-color="#3fc0e6"/><stop offset=".5" stop-color="#2196dc"/><stop offset="1" stop-color="#2a7be0"/></linearGradient></defs>
<circle cx="8.8" cy="8.8" r="8" fill="url(#ge)"/>
<path d="M1 8.2 C3.5 6.6 6.5 6.2 8.6 7.4 C10.6 8.6 10.2 11.6 12.4 12.4 C9.6 13.4 7.4 12.4 6.4 10.4 C5.2 8.6 3.2 8.2 1 9.4 Z" fill="#114c8f"/>
<path d="M10 7.2 L16.4 6.2 C17 8.2 16.8 10.4 15.8 12 L10.4 12 C9.2 10.6 9.2 8.6 10 7.2 Z" fill="#3fbf5c"/>
<circle cx="15.4" cy="3.2" r="2.5" fill="#e6cfa6"/></svg>
<svg style="left:565.5px;top:538px;" width="17" height="17" viewBox="0 0 17 17"><path d="M8 .6 L15.4 3.4 L15.4 13.4 L8 16.4 L.8 13.4 L.8 3.4 Z" fill="#b7d3ee"/>
<path d="M8 .6 L15.4 3.4 L8 6 L.8 3.4Z" fill="#d6e6f6"/><path d="M8 6 L15.4 3.4 L15.4 13.4 L8 16.4Z" fill="#9cc0e4"/>
<rect x="3.6" y="6.8" width="1.3" height="5.8" fill="#f1f7fd"/><rect x="5.8" y="7.4" width="1.3" height="5.8" fill="#f1f7fd"/><rect x="9.4" y="8" width="1.2" height="5" fill="#eaf3fc"/><rect x="11.4" y="7.4" width="1.2" height="5" fill="#eaf3fc"/></svg>
<svg style="left:880px;top:543.4px;" width="11" height="7" viewBox="0 0 11 7"><path d="M1 5.9 L5.4 1.3 L9.8 5.9" stroke="#f2f2f2" stroke-width="1.25" fill="none"/></svg>
<svg style="left:899.5px;top:542.5px;" width="10" height="9.5" viewBox="0 0 10 9.5"><text x=".2" y="7.6" font-family="Liberation Sans, sans-serif" font-weight="bold" font-size="8.6" fill="#f2f2f2" textLength="9.2" lengthAdjust="spacingAndGlyphs">[R</text></svg>
<svg style="left:914.5px;top:542.5px;" width="9" height="10" viewBox="0 0 9 10"><path d="M4.8 .9 C6.8 .9 7.8 2.4 7.8 4 C7.8 5.6 6.6 6.6 5.2 6.6 L3.6 9.2 L3.2 6.4 L.9 4.2 Z M2.6 4 H6.8 M4.8 1.6 V6" stroke="#f2f2f2" stroke-width="1" fill="none" stroke-linejoin="round"/></svg>
<svg style="left:925.5px;top:543.8px;" width="8" height="8" viewBox="0 0 8 8"><path d="M.8 5.2 L6.6 .8 L5.6 5 L3.4 7.2 L3.4 4.6 Z M2.2 6.4 L5 3" stroke="#f2f2f2" stroke-width="1" fill="none" stroke-linejoin="round"/></svg>
<svg style="left:941.5px;top:541.4px;" width="15" height="12.5" viewBox="0 0 15 12.5"><path d="M5 1.1 L13.1 .9 L13.1 7.7 L7.6 7.9 L8 11.2 L5.2 7.4 L3.4 7.6 L1.2 4.6 Z M3.2 3.4 L5.4 7.2" stroke="#f2f2f2" stroke-width="1.1" fill="none" stroke-linejoin="round"/></svg>
<span class="t" style="left:973px;top:535px;font-size:9.86px;line-height:11px;color:#f2f2f2;transform:scaleX(1.065);">Ontα</span>
<span class="t" style="left:965px;top:547px;font-size:9.86px;line-height:11px;color:#f2f2f2;transform:scaleX(0.954);">220.300</span>
<svg style="left:1004px;top:542.5px;" width="11" height="12" viewBox="0 0 11 12"><path d="M9 1 V7.4 H3.4 M3.4 4.6 V10.6" stroke="#e6e6e6" stroke-width="1.1" fill="none"/><path d="M1.2 6 V11" stroke="#8a8a8a" stroke-width=".8"/></svg>
<div style="left:1021px;top:533px;width:0.8px;height:26px;background:#6d7074;"></div>
</section>
</div></body></html>
